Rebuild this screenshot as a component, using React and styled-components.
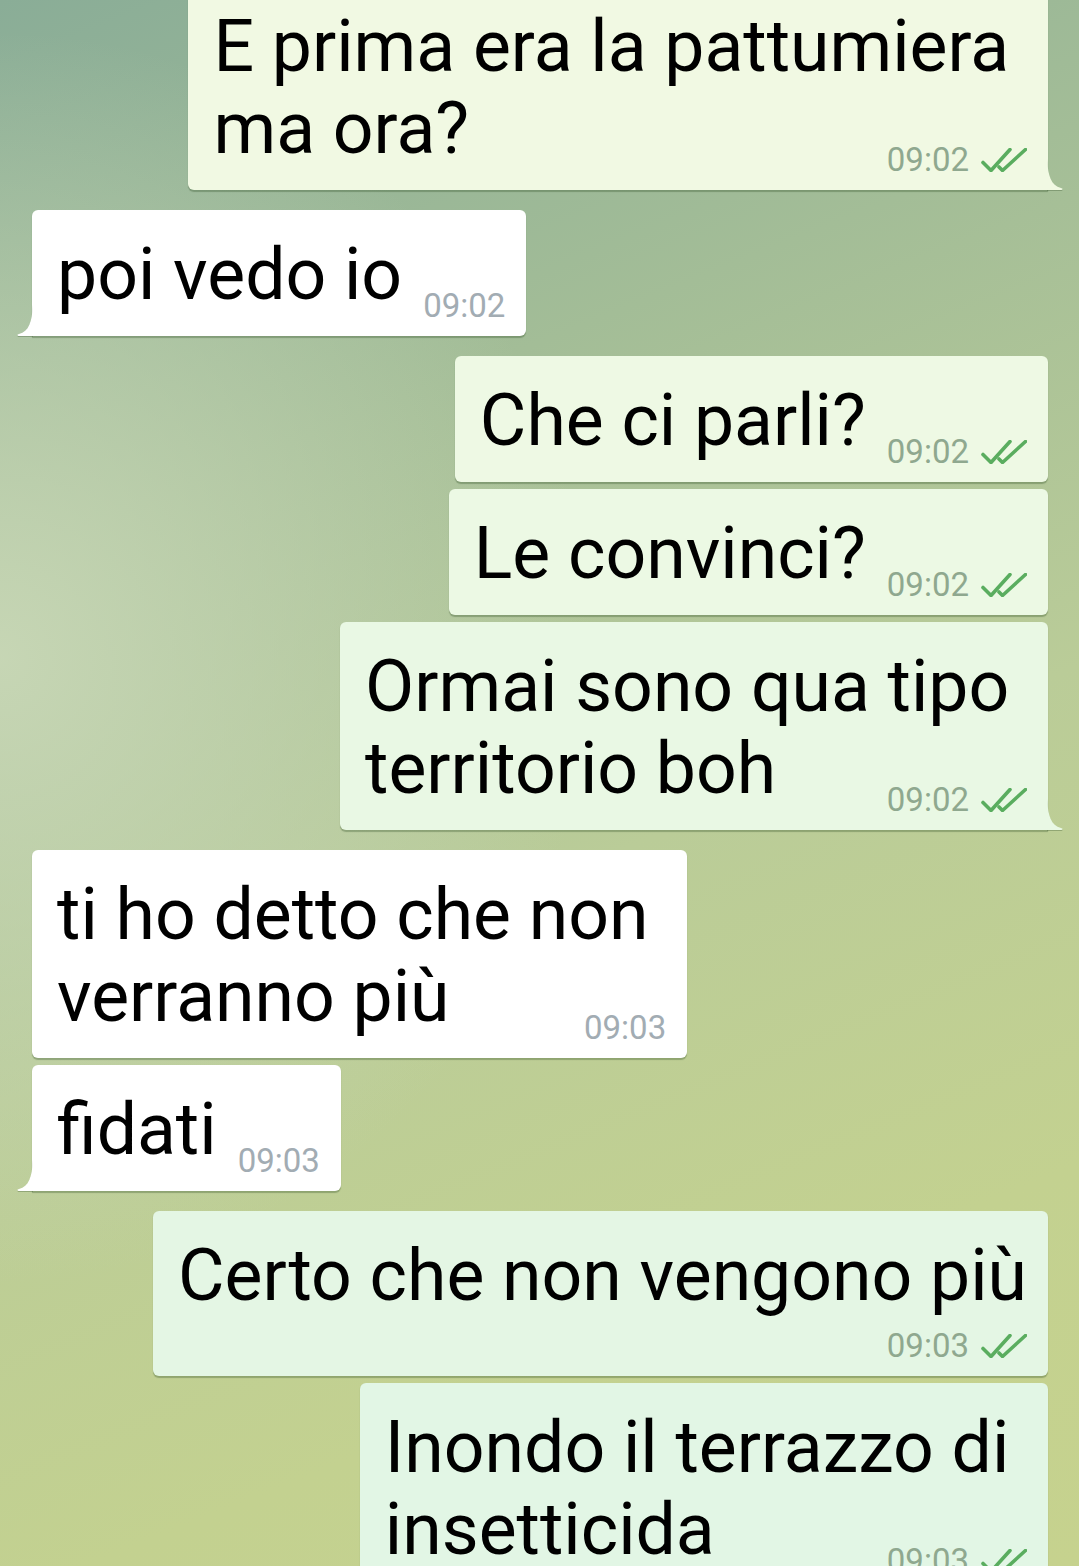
import React from "react";
import styled, { createGlobalStyle, css } from "styled-components";

const GlobalStyle = createGlobalStyle`
  html, body { margin: 0; padding: 0; }
  body { font-family: Roboto, "Noto Sans", sans-serif; }
`;

const Screen = styled.div`
  width: 1079px;
  height: 1566px;
  overflow: hidden;
  background:
    radial-gradient(ellipse 55% 40% at 0% 42%, rgba(200, 215, 182, 0.95) 0%, rgba(200, 215, 182, 0) 100%),
    linear-gradient(158deg, #8aad97 0%, #a3bd97 28%, #bacc98 55%, #c3d190 80%, #c6d28e 100%);
`;

const Feed = styled.div`
  display: flex;
  flex-direction: column;
  gap: 20px;
  padding: 0 31px 0 32px;
  margin-top: -18px;
`;

const Group = styled.div`
  display: flex;
  flex-direction: column;
  gap: 7px;
  align-items: ${(p) => (p.$out ? "flex-end" : "flex-start")};
`;

const Bubble = styled.div`
  position: relative;
  display: flow-root;
  padding: 24px 21px 11px 25px;
  border-radius: 6px;
  background: ${(p) => p.$bg};
  box-shadow: 0 1.5px 1px rgba(45, 75, 35, 0.32);
  font-size: 71.5px;
  line-height: 82px;
  color: #000;
  white-space: pre;
  ${(p) =>
    p.$tail &&
    (p.$out
      ? css`border-bottom-right-radius: 0;`
      : css`border-bottom-left-radius: 0;`)}
`;

const Tail = styled.svg`
  position: absolute;
  bottom: 0;
  width: 17px;
  height: 32px;
  ${(p) =>
    p.$out
      ? css`right: -16px;`
      : css`left: -16px; transform: scaleX(-1);`}
  filter: drop-shadow(0 1.5px 0.5px rgba(45, 75, 35, 0.3));
  overflow: visible;
`;

const Meta = styled.span`
  display: flex;
  align-items: center;
  justify-content: flex-end;
  gap: 12px;
  font-size: 33px;
  line-height: 39px;
  white-space: nowrap;
  color: ${(p) => (p.$out ? "#8fa88f" : "#a2acb3")};
  ${(p) =>
    p.$below
      ? css`margin: 9px 0 0 0;`
      : css`float: right; margin: 52px 0 0 21px;`}
`;

const Checks = () => (
  <svg width="46" height="24" viewBox="0 0 46 24" fill="none">
    <path d="M2 14.5 L10 22.5 L29 1.5" stroke="#5aad5f" strokeWidth="3.6" strokeLinecap="round" strokeLinejoin="round" />
    <path d="M18 19 L21.5 22.5 L44.5 1.5" stroke="#5aad5f" strokeWidth="3.6" strokeLinecap="round" strokeLinejoin="round" />
  </svg>
);

const groups = [
  {
    out: true,
    msgs: [
      { lines: ["E prima era la pattumiera ", "ma ora?"], time: "09:02", tail: true, bg: "#f1f9e3" },
    ],
  },
  {
    out: false,
    msgs: [{ lines: ["poi vedo io"], time: "09:02", tail: true }],
  },
  {
    out: true,
    msgs: [
      { lines: ["Che ci parli?"], time: "09:02", bg: "#eef9e4" },
      { lines: ["Le convinci?"], time: "09:02", bg: "#ecf9e4" },
      { lines: ["Ormai sono qua tipo ", "territorio boh"], time: "09:02", tail: true, bg: "#e9f8e4" },
    ],
  },
  {
    out: false,
    msgs: [
      { lines: ["ti ho detto che non ", "verranno più"], time: "09:03" },
      { lines: ["fidati"], time: "09:03", tail: true },
    ],
  },
  {
    out: true,
    msgs: [
      { lines: ["Certo che non vengono più"], time: "09:03", below: true, bg: "#e4f6e4" },
      { lines: ["Inondo il terrazzo di ", "insetticida"], time: "09:03", bg: "#e2f6e5" },
    ],
  },
];

function Message({ out, m }) {
  const bg = out ? m.bg : "#ffffff";
  return (
    <Bubble $out={out} $tail={m.tail} $bg={bg}>
      {m.lines.map((l, i) => (
        <React.Fragment key={i}>
          {l}
          {i < m.lines.length - 1 && <br />}
        </React.Fragment>
      ))}
      <Meta $out={out} $below={m.below}>
        <span>{m.time}</span>
        {out && <Checks />}
      </Meta>
      {m.tail && (
        <Tail $out={out} viewBox="0 0 17 32">
          <path d="M0 0 C1 18 4 27.5 14 30 Q17 31 14.5 32 L0 32 Z" fill={bg} />
        </Tail>
      )}
    </Bubble>
  );
}

export default function App() {
  return (
    <>
      <GlobalStyle />
      <Screen>
        <Feed>
          {groups.map((g, gi) => (
            <Group key={gi} $out={g.out}>
              {g.msgs.map((m, mi) => (
                <Message key={mi} out={g.out} m={m} />
              ))}
            </Group>
          ))}
        </Feed>
      </Screen>
    </>
  );
}
